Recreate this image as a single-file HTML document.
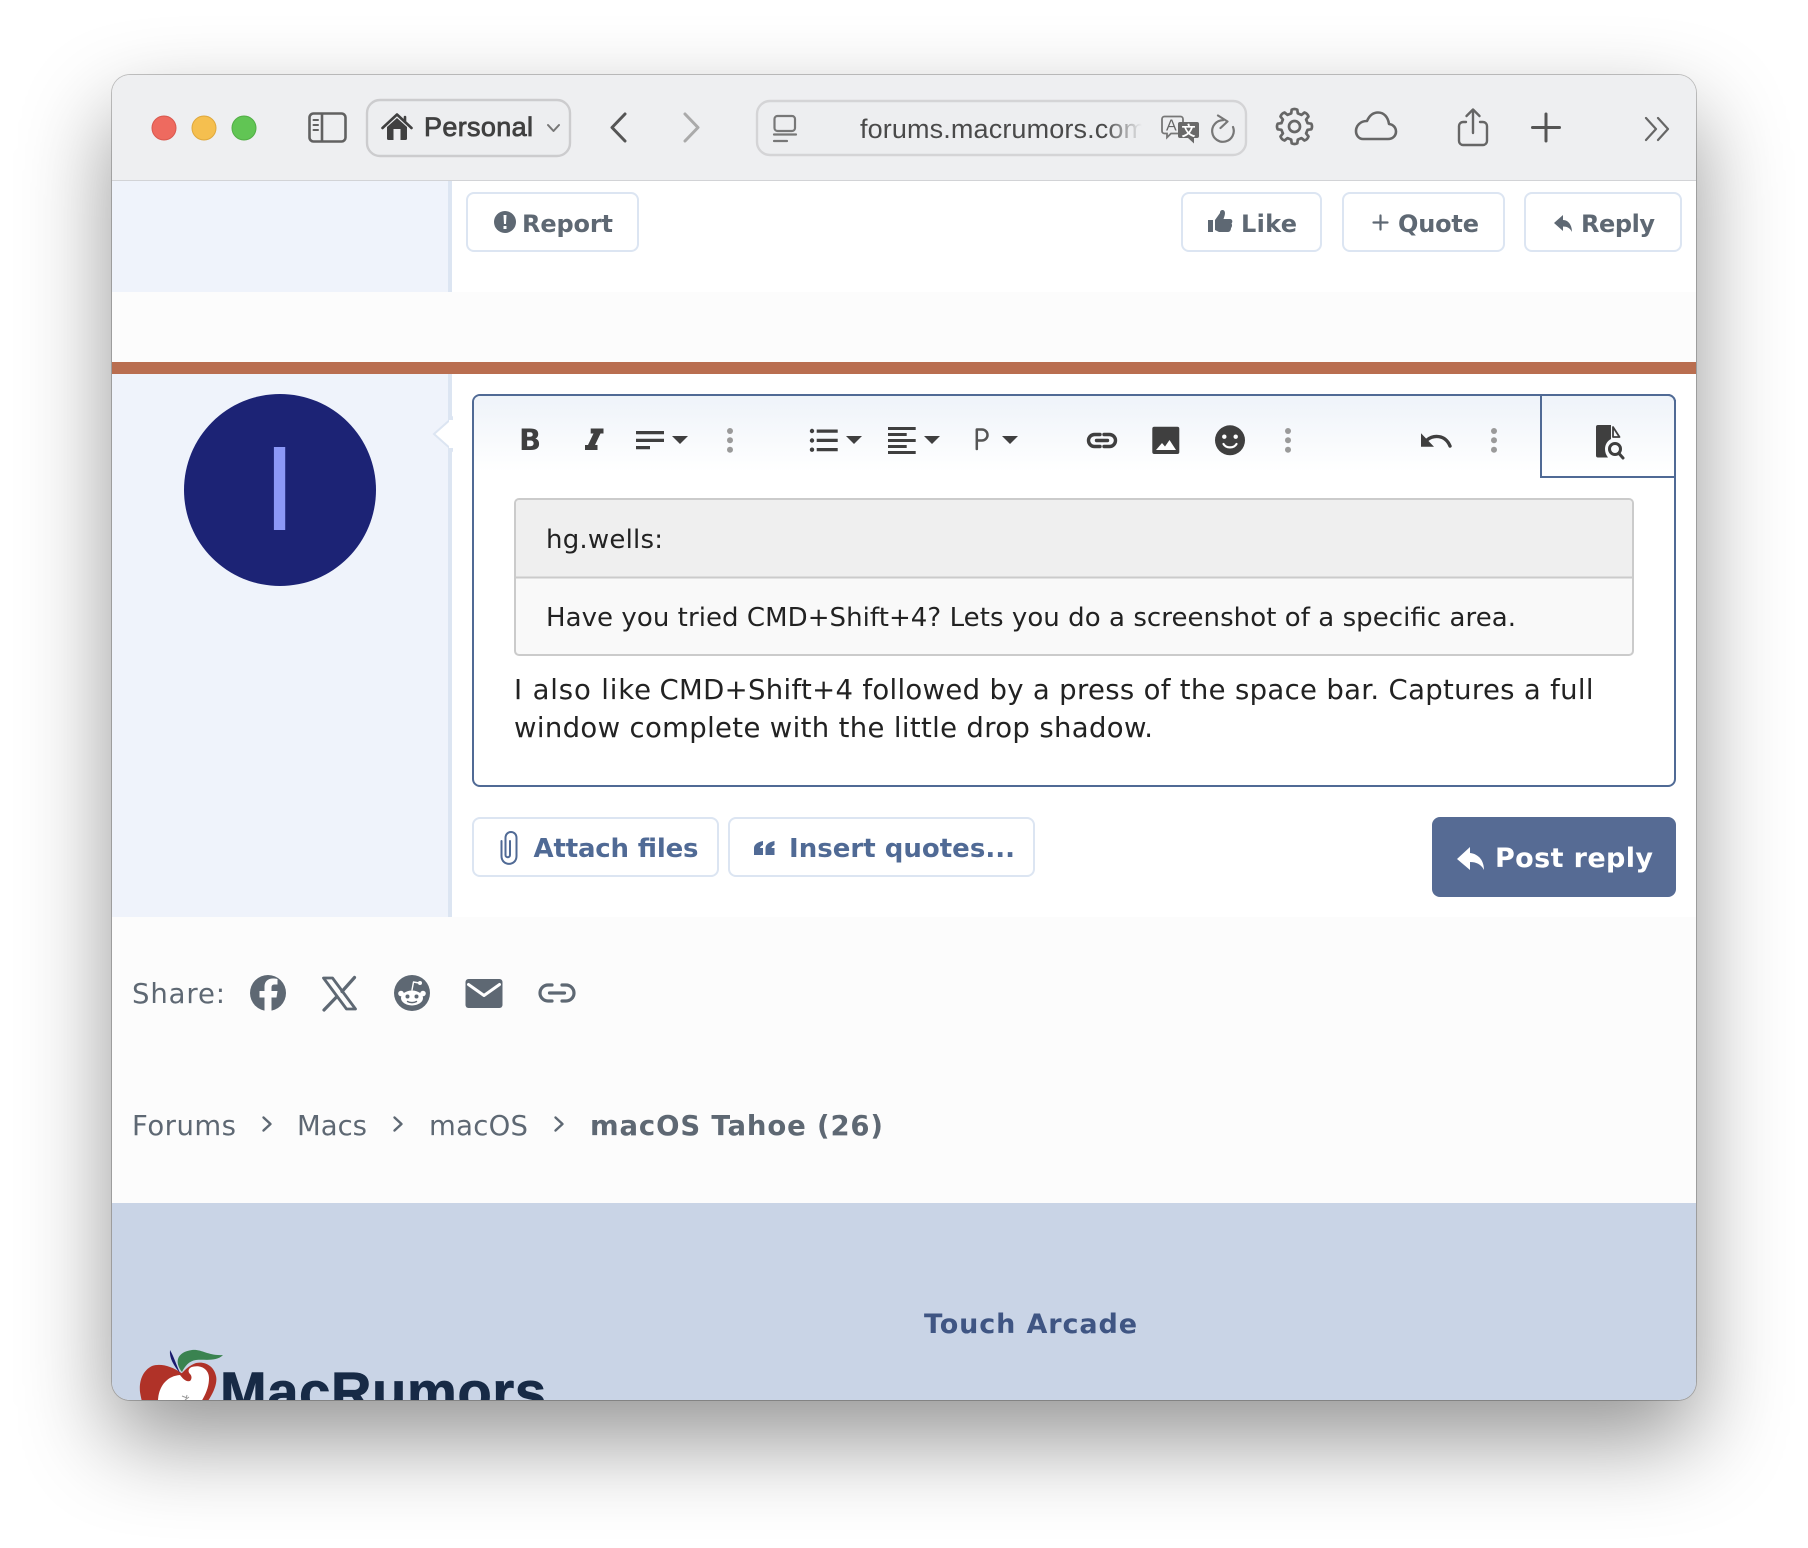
<!DOCTYPE html>
<html lang="en">
<head>
<meta charset="utf-8">
<title>macOS Tahoe (26) - MacRumors Forums</title>
<style>
html,body{margin:0;padding:0;width:1808px;height:1548px;background:#fff;overflow:hidden}
#win{position:absolute;left:112px;top:75px;width:1584px;height:1325px;border-radius:18px;overflow:hidden;box-shadow:0 40px 90px rgba(0,0,0,.42),0 0 0 1px rgba(0,0,0,.22);background:#fcfcfc}
#win svg{display:block}
.d{font-family:"DejaVu Sans",sans-serif}
.b{font-family:"DejaVu Sans",sans-serif;font-weight:700}
.l{font-family:"Liberation Sans",sans-serif}
.ib{fill:#5e6873;font-size:24px}
.lnk{fill:#5e6873;font-size:27.5px}
.q{fill:#222;font-size:26px}
.m{fill:#222;font-size:27.5px}
.s{fill:none;stroke-linecap:round;stroke-linejoin:round}
</style>
</head>
<body>
<div id="win">
<svg width="1584" height="1325" viewBox="112 75 1584 1325" xmlns="http://www.w3.org/2000/svg">
<defs>
<linearGradient id="tb" x1="0" y1="394" x2="0" y2="472" gradientUnits="userSpaceOnUse"><stop offset="0" stop-color="#eef3f9"/><stop offset="1" stop-color="#fff"/></linearGradient>
<linearGradient id="fade" x1="1105" y1="0" x2="1142" y2="0" gradientUnits="userSpaceOnUse"><stop offset="0" stop-color="#4a4a4a"/><stop offset="1" stop-color="#4a4a4a" stop-opacity="0"/></linearGradient>
</defs>

<!-- browser toolbar -->
<rect x="112" y="75" width="1584" height="106" fill="#eeeff1"/>
<rect x="112" y="180" width="1584" height="1.5" fill="#d2d3d6"/>
<circle cx="164" cy="128" r="12" fill="#ee6a5f" stroke="#d9584e"/>
<circle cx="204" cy="128" r="12" fill="#f5bf4f" stroke="#dfa83c"/>
<circle cx="244" cy="128" r="12" fill="#61c554" stroke="#52ae46"/>
<g class="s" stroke="#616161" stroke-width="2.6">
<rect x="309.5" y="113.5" width="36" height="28" rx="4"/><path d="M322 114V141"/>
<path d="M313.5 120H318M313.5 125H318M313.5 130H318" stroke-width="2"/>
</g>
<rect x="367" y="100" width="203" height="56" rx="13" fill="#edeef0" stroke="#ccccce" stroke-width="2.4"/>
<path d="M387 127L397 118L407 127V138.500a1.500 1.500 0 0 1-1.500 1.500H388.500a1.500 1.500 0 0 1-1.500-1.500Z" fill="#404040"/>
<rect x="393.500" y="129" width="7" height="11" fill="#edeef0"/>
<path class="s" d="M382.500 128L397 114.500L411.500 128M405 117V122" stroke="#404040" stroke-width="2.600"/>
<text class="l" x="424" y="136" font-size="27" fill="#404040" stroke="#404040" stroke-width=".8" textLength="109">Personal</text>
<path class="s" d="M548 125L553.500 131L559 125" stroke="#777" stroke-width="2"/>
<path class="s" d="M625 114L612 127.500L625 141" stroke="#555" stroke-width="3"/>
<path class="s" d="M685 114L698 127.500L685 141" stroke="#aaa" stroke-width="3"/>
<rect x="757" y="101" width="489" height="54" rx="13" fill="#edeef0" stroke="#d4d4d6" stroke-width="2.400"/>
<g class="s" stroke="#777" stroke-width="2.200">
<rect x="774.500" y="116" width="20.500" height="15" rx="3"/><path d="M774 134.500H796M774 141H787"/>
</g>
<text class="l" x="860" y="138" font-size="27" fill="url(#fade)" textLength="286">forums.macrumors.com</text>
<path d="M1164.500 116.500H1180.500a2.500 2.500 0 0 1 2.500 2.500V131a2.500 2.500 0 0 1-2.500 2.500H1171L1167 137.500V133.500H1164.500a2.500 2.500 0 0 1-2.500-2.500V119a2.500 2.500 0 0 1 2.500-2.500Z" fill="#edeef0" stroke="#777" stroke-width="1.800"/>
<text class="l" x="1166" y="130.500" font-size="16" fill="#666">A</text>
<path d="M1180 122H1197a2 2 0 0 1 2 2V136a2 2 0 0 1-2 2H1194V143.500L1188 138H1180a2 2 0 0 1-2-2V124a2 2 0 0 1 2-2Z" fill="#696969"/>
<text x="1181.500" y="136" font-size="14" font-family="'Liberation Sans','Noto Sans CJK SC',sans-serif" font-weight="700" fill="#fff">文</text>
<g class="s" stroke="#777" stroke-width="2.200">
<path d="M1223 120.200A10.800 10.800 0 1 0 1233 127"/><path d="M1218 115.500L1227.500 121.500L1220.500 128"/>
</g>
<g transform="translate(1294.500 126.500)" class="s" stroke="#666" stroke-width="2.700">
<path d="M-3.300-13.100L-2.800-16.800Q0-18.200 2.800-16.800L3.300-13.100L6.930-11.600L10-14Q13-13 14-10L11.600-6.930L13.100-3.300L16.800-2.800Q18.200 0 16.800 2.800L13.100 3.300L11.600 6.930L14 10Q13 13 10 14L6.930 11.600L3.300 13.100L2.800 16.800Q0 18.200-2.800 16.800L-3.300 13.100L-6.930 11.600L-10 14Q-13 13-14 10L-11.600 6.930L-13.100 3.300L-16.800 2.800Q-18.200 0-16.800-2.800L-13.100-3.300L-11.600-6.930L-14-10Q-13-13-10-14L-6.930-11.600Z"/>
<circle r="5.500"/>
</g>
<path class="s" d="M1363 139H1388C1393 139 1396 135.500 1396 131.500C1396 127.500 1393 124.500 1389 124C1388 117 1384 112.500 1378 112.500C1372 112.500 1369 116.500 1367 121C1360 121 1356 126 1356 131C1356 135.500 1359 139 1363 139Z" stroke="#666" stroke-width="2.600"/>
<g class="s" stroke="#666" stroke-width="2.400">
<path d="M1466 122H1463a4 4 0 0 0-4 4V141a4 4 0 0 0 4 4H1483a4 4 0 0 0 4-4V126a4 4 0 0 0-4-4H1480"/>
<path d="M1473 110V133"/><path d="M1466.500 116L1473 109.500L1479.500 116"/>
</g>
<path class="s" d="M1532.500 127.500H1559.500M1546 114V141" stroke="#555" stroke-width="3"/>
<path class="s" d="M1646 118L1656 129L1646 140M1658 118L1668 129L1658 140" stroke="#666" stroke-width="2.200"/>

<!-- top post -->
<rect x="452" y="181" width="1244" height="111" fill="#fff"/>
<rect x="112" y="181" width="336" height="111" fill="#eff3fb"/>
<rect x="448" y="181" width="4" height="111" fill="#dce5f2"/>
<rect x="112" y="362" width="1584" height="12" fill="#b96e50"/>

<g fill="#fff" stroke="#dce5f2" stroke-width="2">
<rect x="467" y="193" width="171" height="58" rx="7"/>
<rect x="1182" y="193" width="139" height="58" rx="7"/>
<rect x="1343" y="193" width="161" height="58" rx="7"/>
<rect x="1525" y="193" width="156" height="58" rx="7"/>
</g>
<circle cx="505" cy="222" r="11" fill="#5e6873"/>
<path d="M503.500 215H506.500L506 224H504ZM503.500 226H506.500V229H503.500Z" fill="#fff"/>
<text class="b ib" x="522" y="232" textLength="91">Report</text>
<rect x="1208" y="220" width="5" height="12" fill="#5e6873"/>
<path d="M1215 220L1220 213C1220 211 1221 210 1222.500 210C1225 210 1225.500 213 1224.500 216L1223.500 219H1230C1232.500 219 1233 222 1231.500 223.500C1232.500 225 1232 227 1231 228C1231 230 1230 232 1228 232H1219L1215 230Z" fill="#5e6873"/>
<text class="b ib" x="1241" y="232" textLength="56">Like</text>
<path class="s" d="M1380.500 215.500V229.500M1373.500 222.500H1387.500" stroke="#5e6873" stroke-width="2.200"/>
<text class="b ib" x="1398" y="232" textLength="81">Quote</text>
<path d="M1554 223L1563 215V220C1569 220 1572 226 1572 232C1570 228 1567 226.500 1563 226.500V231Z" fill="#5e6873"/>
<text class="b ib" x="1581" y="232" textLength="74">Reply</text>

<!-- reply row -->
<rect x="452" y="374" width="1244" height="543" fill="#fff"/>
<rect x="112" y="374" width="336" height="543" fill="#eff3fb"/>
<rect x="448" y="374" width="4" height="543" fill="#dce5f2"/>
<polygon points="452,418 434,434 452,450" fill="#fff" stroke="#dce5f2" stroke-width="2"/>
<rect x="449" y="420" width="4" height="28" fill="#fff"/>
<circle cx="280" cy="490" r="96" fill="#1c2375"/>
<text class="l" x="279.500" y="530" font-size="121" text-anchor="middle" fill="#8c98f7">I</text>

<!-- editor -->
<rect x="473" y="395" width="1202" height="391" rx="7" fill="#fff" stroke="#506a95" stroke-width="2"/>
<path d="M480 396H1674V470H474V402a6 6 0 0 1 6-6Z" fill="url(#tb)"/>
<path d="M1541 395V477H1675" fill="none" stroke="#506a95" stroke-width="2"/>
<path d="M1675 400V477" fill="none" stroke="#506a95" stroke-width="2"/>
<path d="M480 395H1668a7 7 0 0 1 7 7" fill="none" stroke="#506a95" stroke-width="2"/>

<g fill="#3f3f3f">
<text class="b" x="519" y="450" font-size="29" fill="#3f3f3f">B</text>
<path d="M590.700 428.500H603.500V433.500H600.500L595 445H597.500V450H585V445H588L593.500 433.500H590.700Z"/>
<path d="M636 431H664V434.300H636ZM636 438.700H664V442H636ZM636 446H650V449.300H636Z"/>
<path d="M672 436H688L680 444ZM846 436H862L854 444ZM924 436H940L932 444ZM1002 436H1018L1010 444Z"/>
<circle cx="812" cy="431" r="2.200"/><circle cx="812" cy="440.500" r="2.200"/><circle cx="812" cy="449.700" r="2.200"/>
<path d="M816.700 429.500H837.700V432.800H816.700ZM816.700 438.700H837.700V442H816.700ZM816.700 448H837.700V451.300H816.700Z"/>
<path d="M888 427H915.700V430H888ZM888 433H906.700V436H888ZM888 439H915.700V442H888ZM888 445H906.700V448H888ZM888 451H915.700V454H888Z"/>
<rect x="1152.300" y="426.700" width="27" height="27.300" rx="2"/>
<circle cx="1230" cy="440.300" r="15"/>
<path d="M1421 433.300V446.700H1434Z"/>
<path d="M1598 425H1611V439C1607 441 1605 445 1605 449C1605 452 1606 455 1608 457.500H1598a2 2 0 0 1-2-2V427a2 2 0 0 1 2-2Z"/>
</g>
<path class="s" d="M976.800 449V429.500H982a5.200 5.200 0 0 1 0 11H976.800" stroke="#555" stroke-width="2.500"/>
<path d="M1156 450L1162 443L1165 446.500L1169.500 440L1176 450Z" fill="#fff"/>
<circle cx="1224.300" cy="436.700" r="2.200" fill="#fff"/><circle cx="1235.700" cy="436.700" r="2.200" fill="#fff"/>
<path class="s" d="M1223.500 444C1226 448.500 1234 448.500 1236.500 444" stroke="#fff" stroke-width="2.200"/>
<path class="s" d="M1427 440C1433 435 1445 434 1450 446" stroke="#3f3f3f" stroke-width="3.400"/>
<path class="s" d="M1613 427L1619.500 437H1613Z" fill="#3f3f3f" fill-opacity=".15" stroke="#3f3f3f" stroke-width="1.800"/>
<circle cx="1615" cy="449" r="5.500" fill="none" stroke="#3f3f3f" stroke-width="3"/>
<path class="s" d="M1619 453.500L1623 458" stroke="#3f3f3f" stroke-width="3"/>
<path class="s" d="M1100 434.500H1094.500a6 6 0 0 0 0 12H1100M1104 434.500H1109.500a6 6 0 0 1 0 12H1104M1096.500 440.500H1107.500" stroke="#3f3f3f" stroke-width="3.400"/>
<g fill="#9a9a9a">
<circle cx="730" cy="431" r="3"/><circle cx="730" cy="440.300" r="3"/><circle cx="730" cy="449.700" r="3"/>
<circle cx="1288" cy="431" r="3"/><circle cx="1288" cy="440.300" r="3"/><circle cx="1288" cy="449.700" r="3"/>
<circle cx="1494" cy="431" r="3"/><circle cx="1494" cy="440.300" r="3"/><circle cx="1494" cy="449.700" r="3"/>
</g>

<!-- quote block -->
<rect x="515" y="499" width="1118" height="156" rx="4" fill="#f9f9f9" stroke="#cbcbcb" stroke-width="2"/>
<path d="M516 577V504a4 4 0 0 1 4-4H1628a4 4 0 0 1 4 4V577Z" fill="#efefef"/>
<rect x="515" y="576.500" width="1118" height="2" fill="#cbcbcb"/>
<text class="d q" x="546" y="548" textLength="117">hg.wells:</text>
<text class="d q" x="546" y="626" textLength="970">Have you tried CMD+Shift+4? Lets you do a screenshot of a specific area.</text>
<text class="d m" x="514" y="699" textLength="137">I also like</text>
<text class="d m" x="659.500" y="699" textLength="934">CMD+Shift+4 followed by a press of the space bar. Captures a full</text>
<text class="d m" x="514" y="737" textLength="639">window complete with the little drop shadow.</text>

<!-- actions -->
<rect x="473" y="818" width="245" height="58" rx="7" fill="#fff" stroke="#dce5f2" stroke-width="2"/>
<rect x="729" y="818" width="305" height="58" rx="7" fill="#fff" stroke="#dce5f2" stroke-width="2"/>
<path class="s" d="M510 841V855C510 858 505.500 858 505.500 855V838C505.500 830 516.500 830 516.500 838V856C516.500 866.500 501.500 866.500 501.500 856V841" stroke="#506a95" stroke-width="2"/>
<text class="b" x="533.500" y="857" font-size="26" fill="#506a95" textLength="165">Attach files</text>
<path d="M754 855V848C754 845 757 842 763 841V845C761 846 760 847 760 848H763V855ZM765.500 855V848C765.500 845 768.500 842 774.500 841V845C772.500 846 771.500 847 771.500 848H774.500V855Z" fill="#506a95"/>
<text class="b" x="789" y="857" font-size="26" fill="#506a95" textLength="226">Insert quotes...</text>
<rect x="1432" y="817" width="244" height="80" rx="8" fill="#566b94"/>
<path d="M1457 859L1470 847V853C1479 854 1484 861 1484 870C1481 864 1476 862 1470 862V870Z" fill="#fff"/>
<text class="b" x="1495" y="867" font-size="27" fill="#fff" textLength="158">Post reply</text>

<!-- share -->
<text class="d lnk" x="132" y="1003" textLength="93">Share:</text>
<circle cx="268" cy="993" r="18" fill="#5e6873"/>
<path d="M271.500 1011V997.500H276.500L277.500 991H271.500V987.500C271.500 985.500 272.500 984.500 274.500 984.500H277.500V979C276 978.500 274.500 978.500 273 978.500C268 978.500 264.500 981.500 264.500 986.500V991H259.500V997.500H264.500V1011Z" fill="#fcfcfc"/>
<path d="M323.500 978H332.500L355.500 1009H346.500Z" fill="none" stroke="#5e6873" stroke-width="2.800" stroke-linejoin="round"/>
<path d="M354.500 977.500L342 991.500M336.500 997L324 1010" stroke="#5e6873" stroke-width="3.200" stroke-linecap="round"/>
<circle cx="412" cy="993" r="18" fill="#5e6873"/>
<ellipse cx="412" cy="998" rx="11" ry="7.500" fill="#fff"/>
<circle cx="401" cy="993.500" r="2.800" fill="#fff"/><circle cx="423" cy="993.500" r="2.800" fill="#fff"/>
<circle cx="407.500" cy="996.500" r="2" fill="#5e6873"/><circle cx="416.500" cy="996.500" r="2" fill="#5e6873"/>
<path class="s" d="M407.500 1001.500C410 1003 414 1003 416.500 1001.500" stroke="#5e6873" stroke-width="1.400"/>
<path class="s" d="M412 990L413.500 982L419 983" stroke="#fff" stroke-width="1.400"/>
<circle cx="420" cy="983" r="2" fill="#fff"/>
<rect x="465.500" y="979" width="37" height="29" rx="3" fill="#5e6873"/>
<path class="s" d="M468.500 984.500L484 995.500L499.500 984.500" stroke="#fff" stroke-width="3"/>
<path class="s" d="M552 985H548a8 8 0 0 0 0 16H552M562 985H566a8 8 0 0 1 0 16H562M549.500 993H564.500" stroke="#5e6873" stroke-width="3.200"/>

<!-- breadcrumb -->
<text class="d lnk" x="132" y="1135" textLength="104">Forums</text>
<path class="s" d="M263.500 1117.500L270.500 1124L263.500 1130.500" stroke="#5e6873" stroke-width="2.400"/>
<text class="d lnk" x="297" y="1135" textLength="70">Macs</text>
<path class="s" d="M394.500 1117.500L401.500 1124L394.500 1130.500" stroke="#5e6873" stroke-width="2.400"/>
<text class="d lnk" x="429" y="1135" textLength="99">macOS</text>
<path class="s" d="M555.500 1117.500L562.500 1124L555.500 1130.500" stroke="#5e6873" stroke-width="2.400"/>
<text class="b lnk" x="590" y="1135" textLength="293">macOS Tahoe (26)</text>

<!-- footer -->
<rect x="112" y="1203" width="1584" height="197" fill="#c9d4e6"/>
<text class="b" x="924" y="1333" font-size="27" fill="#3f5583" textLength="213">Touch Arcade</text>
<path d="M181.700 1373.300C172 1366 160 1363 152 1366C142 1371 139 1382 140 1392C141 1398 142 1402 143 1405H205C212 1396 218 1384 216 1376C214 1366 205 1361 196 1363C190 1365 186 1369 181.700 1373.300Z" fill="#b03228"/>
<path d="M158 1405C157 1388 166 1376 180 1375C183 1379 186 1382 190 1381C192 1379 192 1376 190 1374C187 1371 189 1367 194 1366.500C202 1365 209 1370 209 1378C209 1388 205 1396 199 1405Z" fill="#fff"/>
<path d="M182 1372C174 1362 177 1352 192 1350C202 1349 208 1356 223 1355C216 1362 205 1359 196 1360C189 1361 185 1366 182 1372Z" fill="#3a8350"/>
<path d="M170 1350C169 1358 174 1366 180 1373C176 1364 174 1357 170 1350Z" fill="#1a1a6e"/>
<path d="M182 1396L187 1398M185 1400L189 1397M187 1395L186 1399" stroke="#999" stroke-width="1"/>
<text class="l" x="220" y="1411" font-size="56" font-weight="700" fill="#172a46" stroke="#172a46" stroke-width=".8" textLength="326">MacRumors</text>
</svg>
</div>
</body>
</html>
